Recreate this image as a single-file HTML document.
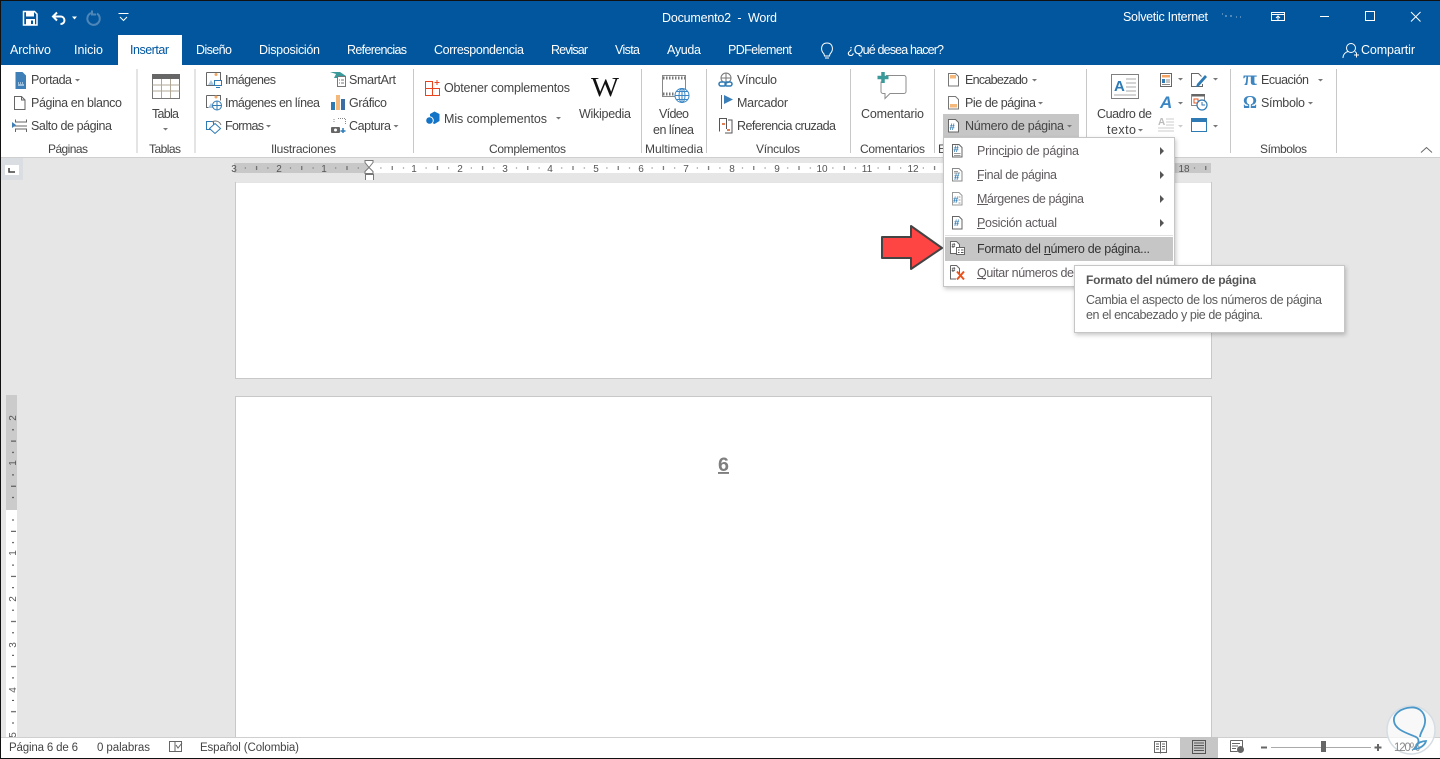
<!DOCTYPE html>
<html lang="es"><head><meta charset="utf-8"><title>Documento2 - Word</title>
<style>
html,body{margin:0;padding:0;background:#e6e6e6;width:1440px;height:759px;overflow:hidden}
svg{display:block;position:absolute;left:0;top:0}
text{font-family:"Liberation Sans",sans-serif;font-size:12.5px;fill:#444;white-space:pre}
.w text,text.w{fill:#fff}
.m text{fill:#5f5a5e}
.r text{font-size:10px;fill:#555}
.s text{font-size:11.5px;fill:#444}
.ic{fill:none;stroke:#666;stroke-width:1}
.c{fill:#777}
</style></head><body>
<svg width="1440" height="759" viewBox="0 0 1440 759" xmlns="http://www.w3.org/2000/svg">
<defs>
<pattern id="hr" x="233.5" y="163" width="45.2" height="10" patternUnits="userSpaceOnUse">
<rect x="11.3" y="4.500" width="1" height="1" fill="#555"/><rect x="22.6" y="3" width="1" height="4" fill="#555"/><rect x="33.9" y="4.500" width="1" height="1" fill="#555"/>
</pattern>
<pattern id="vr" x="6" y="418" width="11" height="45.1" patternUnits="userSpaceOnUse">
<rect x="6" y="11.3" width="2" height="1" fill="#444"/><rect x="5" y="22.6" width="5" height="1" fill="#444"/><rect x="6" y="33.9" width="2" height="1" fill="#444"/>
</pattern>
<filter id="sh" x="-5%" y="-5%" width="110%" height="115%"><feDropShadow dx="1" dy="2" stdDeviation="2" flood-color="#000" flood-opacity=".22"/></filter>
</defs>

<!-- background -->
<rect width="1440" height="759" fill="#e6e6e6"/>
<rect x="0" y="1" width="1440" height="64" fill="#01569e"/>
<rect x="118" y="35" width="64" height="30" fill="#fff"/>
<rect x="0" y="65" width="1440" height="92" fill="#fff"/>
<rect x="0" y="157" width="1440" height="1" fill="#cfcfcf"/>

<!-- QAT -->
<g fill="none" stroke="#fff">
<path d="M23.5 11.5h11l2.500 2.500v11h-13.500z" stroke-width="1.500"/>
<rect x="26" y="12" width="8" height="4.500" fill="#fff" stroke="none"/>
<rect x="26" y="19" width="9" height="6" fill="#fff" stroke="none"/>
<rect x="31" y="20.500" width="2" height="3.500" fill="#01569e" stroke="none"/>
<path d="M57 12.500l-4 4 4 4M53.500 16.500h7c5 0 5.500 7.500 0 7.500" stroke-width="2"/>
<path d="M97 13.500a6.200 6.200 0 1 1-6-.5M92 10.500v4h4" stroke="#4f86b8" stroke-width="2"/>
<path d="M118.500 13.500h10M120 17l3.500 3.500 3.500-3.500" stroke-width="1"/>
</g>
<path d="M72 16.500h5l-2.500 3z" fill="#fff"/>

<g class="w">
<text x="662" y="22" textLength="115" lengthAdjust="spacing">Documento2  -  Word</text>
<text x="1123" y="21" textLength="85" lengthAdjust="spacing">Solvetic Internet</text>
<text x="10" y="54" textLength="41" lengthAdjust="spacing">Archivo</text>
<text x="74" y="54" textLength="29" lengthAdjust="spacing">Inicio</text>
<text x="196" y="54" textLength="36" lengthAdjust="spacing">Diseño</text>
<text x="259" y="54" textLength="61" lengthAdjust="spacing">Disposición</text>
<text x="347" y="54" textLength="60" lengthAdjust="spacing">Referencias</text>
<text x="434" y="54" textLength="90" lengthAdjust="spacing">Correspondencia</text>
<text x="551" y="54" textLength="37" lengthAdjust="spacing">Revisar</text>
<text x="615" y="54" textLength="25" lengthAdjust="spacing">Vista</text>
<text x="667" y="54" textLength="34" lengthAdjust="spacing">Ayuda</text>
<text x="728" y="54" textLength="64" lengthAdjust="spacing">PDFelement</text>
<text x="847" y="54" textLength="97" lengthAdjust="spacing">¿Qué desea hacer?</text>
<text x="1361" y="54" textLength="54" lengthAdjust="spacing">Compartir</text>
</g>
<text x="130" y="54" textLength="39" lengthAdjust="spacing" style="fill:#01569e">Insertar</text>

<!-- window controls & bulbs -->
<g fill="none" stroke="#fff" stroke-width="1">
<path d="M1222 14h1M1225 16h2M1230 16h2M1236 17h1M1240 17h1" stroke="#9dbbd8"/>
<rect x="1271.500" y="12.500" width="13" height="8"/><path d="M1271.500 14.500h13M1278 20v-4M1276 18l2-2 2 2"/>
<path d="M1320 16.500h9"/><rect x="1365.500" y="11.500" width="9" height="9"/><path d="M1411 12l9.500 9.500M1420.500 12l-9.500 9.500"/>
<path d="M824 54c-4-4-3-11 3-11s7 7 3 11l-.5 2h-5zM825 58h4"/>
<circle cx="1351" cy="48" r="4.500"/><path d="M1343 58c0-4 3-6 5-6.500M1355 51.500l1 1M1354 55h5M1356.500 52.500v5"/>
</g>

<!-- Ribbon separators -->
<g fill="#c8c8c8">
<rect x="136.500" y="69" width="1" height="84"/><rect x="194.500" y="69" width="1" height="84"/><rect x="413" y="69" width="1" height="84"/><rect x="641" y="69" width="1" height="84"/><rect x="706" y="69" width="1" height="84"/><rect x="850" y="69" width="1" height="84"/><rect x="934" y="69" width="1" height="84"/><rect x="1086" y="69" width="1" height="84"/><rect x="1230" y="69" width="1" height="84"/><rect x="1336" y="69" width="1" height="84"/>
</g>

<!-- hover on Numero de pagina -->
<rect x="943" y="114" width="136" height="23" fill="#c6c6c6"/>

<!-- ribbon text -->
<text x="31" y="84" textLength="41">Portada</text>
<text x="31" y="107" textLength="91">Página en blanco</text>
<text x="31" y="130" textLength="81">Salto de página</text>
<text x="48" y="153" textLength="40" style="font-size:12px">Páginas</text>
<text x="152" y="118" textLength="27">Tabla</text>
<text x="149" y="153" textLength="32" style="font-size:12px">Tablas</text>
<text x="225" y="84" textLength="51">Imágenes</text>
<text x="225" y="107" textLength="95">Imágenes en línea</text>
<text x="225" y="130" textLength="39">Formas</text>
<text x="349" y="84" textLength="47">SmartArt</text>
<text x="349" y="107" textLength="38">Gráfico</text>
<text x="349" y="130" textLength="42">Captura</text>
<text x="271" y="153" textLength="65" style="font-size:12px">Ilustraciones</text>
<text x="444" y="92" textLength="126">Obtener complementos</text>
<text x="444" y="123" textLength="103">Mis complementos</text>
<text x="579" y="118" textLength="52">Wikipedia</text>
<text x="489" y="153" textLength="77" style="font-size:12px">Complementos</text>
<text x="659" y="118" textLength="30">Vídeo</text>
<text x="653" y="134" textLength="41">en línea</text>
<text x="645" y="153" textLength="58" style="font-size:12px">Multimedia</text>
<text x="737" y="84" textLength="40">Vínculo</text>
<text x="737" y="107" textLength="51">Marcador</text>
<text x="737" y="130" textLength="99">Referencia cruzada</text>
<text x="756" y="153" textLength="44" style="font-size:12px">Vínculos</text>
<text x="861" y="118" textLength="63">Comentario</text>
<text x="860" y="153" textLength="65" style="font-size:12px">Comentarios</text>
<text x="938" y="153" style="font-size:12px">E</text>
<text x="965" y="84" textLength="63">Encabezado</text>
<text x="965" y="107" textLength="71">Pie de página</text>
<text x="965" y="130" textLength="99">Número de página</text>
<text x="1097" y="118" textLength="55">Cuadro de</text>
<text x="1107" y="134" textLength="29">texto</text>
<text x="1261" y="84" textLength="48">Ecuación</text>
<text x="1261" y="107" textLength="44">Símbolo</text>
<text x="1260" y="153" textLength="47" style="font-size:12px">Símbolos</text>
<text x="591" y="96" style="font-family:'Liberation Serif',serif;font-size:27px;fill:#111" textLength="28" lengthAdjust="spacingAndGlyphs">W</text>
<text x="1243" y="85" style="font-family:'Liberation Serif',serif;font-size:21px;fill:#3d85c0;font-weight:bold" textLength="14" lengthAdjust="spacingAndGlyphs">π</text>
<text x="1243" y="108" style="font-family:'Liberation Serif',serif;font-size:18px;fill:#3d85c0;font-weight:bold" textLength="14" lengthAdjust="spacingAndGlyphs">Ω</text>

<!-- carets -->
<g class="c">
<path d="M75 79h5l-2.500 2.500z"/><path d="M163 128h5l-2.500 2.500z"/><path d="M266 125h5l-2.500 2.500z"/><path d="M393.500 125h5l-2.500 2.500z"/><path d="M556 117h5l-2.500 2.500z"/>
<path d="M1032 79h5l-2.500 2.500z"/><path d="M1038 102h5l-2.500 2.500z"/><path d="M1067 125h5l-2.500 2.500z"/><path d="M1138 129h5l-2.500 2.500z"/>
<path d="M1178 78h5l-2.500 2.500z"/><path d="M1178 102h5l-2.500 2.500z"/><path d="M1213 78h5l-2.500 2.500z"/><path d="M1213 125h5l-2.500 2.500z"/>
<path d="M1318 79h5l-2.500 2.500z"/><path d="M1308 102h5l-2.500 2.500z"/>
<path d="M1178 125h5l-2.500 2.500z" fill="#ccc"/>
</g>
<path d="M1421 152.500l5.500-5 5.500 5" fill="none" stroke="#666"/>

<!-- Paginas icons -->
<path d="M15.500 72h7l3.500 3.500V89h-10.500z" fill="#3e7fb8"/><path d="M18 83h6" stroke="#fff" stroke-dasharray="1 1"/><path d="M18 85h6" stroke="#fff"/>
<path class="ic" d="M14.500 96.500h7l3.500 3.500v9.500h-10.500z M21.500 96.500v3.500h3.500"/>
<path class="ic" d="M15.500 119.500v2.500h11v-2.500M15.500 132v-3h11v3M27 126h-14"/><path d="M12 122l4 3-4 3z" fill="#3e7fb8"/>

<!-- Tabla icon -->
<rect x="152.500" y="74.500" width="27" height="24" fill="#fff" stroke="#777"/><rect x="152" y="74" width="28" height="5" fill="#666"/>
<path d="M152.500 85h27M152.500 91h27M161.500 79v19M170.500 79v19" stroke="#b0a898" fill="none"/>

<!-- Ilustraciones icons -->
<g>
<path d="M206.500 72.500h14v9M206.500 72.500v13h9" class="ic"/><circle cx="216" cy="74.500" r="1.500" fill="#f4a460"/><path d="M208 85l3-5 3 5z" fill="#a8c6e0"/>
<rect x="214.500" y="80.500" width="7" height="5" fill="#fff" stroke="#2d7ab5"/><path d="M216 87.500h4" stroke="#2d7ab5"/>
<path d="M206.500 95.500h14v5M206.500 95.500v12h7" class="ic"/><circle cx="216" cy="97" r="1.500" fill="#f4a460"/><path d="M208 108l3-5 3 5z" fill="#a8c6e0"/>
<circle cx="217" cy="105.500" r="4.500" fill="#fff" stroke="#2d7ab5"/><path d="M212.500 105.500h9M217 101v9" stroke="#2d7ab5"/>
<rect x="206.500" y="121.500" width="7" height="8" fill="none" stroke="#2d7ab5"/>
<path d="M215 123.500l5.500 5-5.500 5-5.500-5z" fill="#fff" stroke="#2d7ab5"/><path d="M212 122a6 6 0 0 1 9 3" fill="none" stroke="#777"/>
<path d="M330 72h10l6 4h-4l-1 2h-7l2-4z" fill="#3a9a9a"/><rect x="337.500" y="76.500" width="8" height="10" fill="#fff" stroke="#777"/><path d="M339 80h1M341 80h3M339 83h1M341 83h3" stroke="#777"/>
<rect x="331" y="102" width="4" height="8" fill="#2d7ab5"/><rect x="336" y="95" width="4" height="15" fill="#f4b97a"/><rect x="341" y="99" width="4" height="11" fill="#3c6ea3"/>
<path d="M334 122v-3h1M338 118.500h8M345.500 119v5" stroke="#888" stroke-dasharray="1 1" fill="none"/><rect x="331" y="127" width="9" height="6" rx="1" fill="#666"/><circle cx="335.500" cy="130" r="1.500" fill="#fff"/><path d="M343 128v5M340.500 131h5" stroke="#2d7ab5" stroke-width="1.500"/>
</g>

<!-- Complementos -->
<path d="M425.500 81.500h7v7h-7zM432.500 88.500h7v7h-7zM425.500 88.500h7v7h-7zM432.500 84v-2.500" fill="none" stroke="#e8451f"/><path d="M437 80v5M434.500 82.500h5" stroke="#e8451f"/>
<path d="M430 114l4.500-2.500 5 2.500v7l-5 3-4.500-2z" fill="#1373c7"/>
<circle cx="429.500" cy="120.500" r="3.800" fill="#1373c7" stroke="#fff" stroke-width="1"/>

<!-- Multimedia -->
<rect x="662.500" y="75.500" width="23" height="21" fill="#fff" stroke="#888"/><path d="M663 78h22M663 94h12" stroke="#777" stroke-width="3" stroke-dasharray="1.500 1.500"/>
<circle cx="682" cy="95.500" r="7" fill="#fff" stroke="#3a86c4"/><path d="M675 95.500h14M682 88.500v14M676.500 91.500h11M676.500 99.500h11" stroke="#3a86c4" fill="none"/><ellipse cx="682" cy="95.500" rx="3" ry="7" fill="none" stroke="#3a86c4"/>

<!-- Vinculos -->
<circle cx="726" cy="78" r="5" fill="none" stroke="#777"/><path d="M721 78h10M726 73v10" stroke="#777"/>
<rect x="719" y="82" width="7" height="4" rx="2" fill="#fff" stroke="#2d7ab5" stroke-width="1.500"/><rect x="725" y="82" width="7" height="4" rx="2" fill="none" stroke="#2d7ab5" stroke-width="1.500"/>
<path d="M721.500 95v14" stroke="#666"/><path d="M724 95l9 4.500-9 4.500z" fill="#3a7fb8"/>
<path d="M719.500 131.500v-13h7v10.500" fill="none" stroke="#555"/><path d="M722 124h3" stroke="#d9541e" stroke-width="1.500"/>
<path d="M728 120h4v13h-7" fill="none" stroke="#555"/><path d="M727 130h3" stroke="#d9541e" stroke-width="1.500"/>

<!-- Comentario -->
<path d="M886 75.500h18a2 2 0 0 1 2 2v14a2 2 0 0 1-2 2h-14l-5 5v-5h-2a2 2 0 0 1-2-2v-10" fill="#fff" stroke="#8d8d8d"/>
<path d="M883 72v11M877.500 77.500h11" stroke="#3a9a9a" stroke-width="3.500"/>

<!-- Encabezado icons -->
<path d="M948.500 73.500h7l3 3V86h-10z" fill="#fff" stroke="#777"/><rect x="950" y="75" width="6" height="3.500" fill="#f4b97a"/>
<path d="M948.500 96.500h7l3 3V109h-10z" fill="#fff" stroke="#777"/><rect x="950" y="104" width="7" height="3.500" fill="#f4b97a"/>
<path d="M948.500 119.500h7l3 3V132h-10z" fill="#fff" stroke="#666"/>
<text x="949.500" y="130" style="font-size:9.500px;font-weight:bold;fill:#2d7ab5">#</text>

<!-- Text icons -->
<rect x="1111.500" y="74.500" width="27" height="24" fill="#fff" stroke="#808080"/>
<text x="1114" y="91" style="font-size:15px;fill:#2d7ab5;font-weight:bold">A</text>
<path d="M1126 79h10M1126 83h10M1126 87h10M1126 91h10M1114 95h22" stroke="#aaa" fill="none"/>
<rect x="1160.500" y="73.500" width="11" height="13" fill="#fff" stroke="#666"/><rect x="1162" y="75" width="8" height="2.500" fill="#f4a460"/><rect x="1162" y="79" width="3" height="4" fill="#2d7ab5"/><path d="M1166 80h4M1166 82h4M1162 84.500h8" stroke="#888"/>
<path d="M1191.500 84v-10.500h7l3 3M1191.500 84v2.500h11V84" fill="none" stroke="#666"/><path d="M1197 84l8-9 2 2-8 9-3 1z" fill="#2d7ab5"/>
<text x="1160" y="108" style="font-size:17px;font-weight:bold;font-style:italic;fill:#3a86c4">A</text>
<rect x="1191.500" y="94.500" width="13" height="11" fill="#fff" stroke="#888"/><rect x="1192" y="94" width="13" height="2.500" fill="#666"/><rect x="1194" y="99" width="4" height="4" fill="none" stroke="#e8541e"/>
<circle cx="1202" cy="105" r="5" fill="#fff" stroke="#2d7ab5" stroke-width="1.200"/><path d="M1202 102v3h3" fill="none" stroke="#2d7ab5"/>
<text x="1158" y="125" style="font-size:10px;font-weight:bold;fill:#bbb">A</text>
<path d="M1166 119h8M1166 122h8M1166 125h8M1158 128h16M1158 131h16" stroke="#ccc"/>
<rect x="1191.500" y="118.500" width="15" height="13" fill="#fff" stroke="#2d7ab5"/><rect x="1191" y="118" width="16" height="4" fill="#2d7ab5"/>

<!-- Ruler -->
<rect x="234" y="163" width="977" height="10" fill="#fff"/>
<rect x="234" y="163" width="135" height="10" fill="#c8c8c8"/>
<rect x="1175" y="163" width="36" height="10" fill="#c8c8c8"/>
<rect x="234" y="163" width="977" height="10" fill="url(#hr)"/>
<rect x="0" y="158" width="23" height="22" fill="#dadee3"/><rect x="5" y="165" width="14" height="10" fill="#fff"/><path d="M9 168v4h6" fill="none" stroke="#444" stroke-width="1.500"/>
<g class="r" text-anchor="middle">
<text x="234" y="172">3</text><text x="279" y="172">2</text><text x="324" y="172">1</text><text x="414" y="172">1</text><text x="460" y="172">2</text><text x="505" y="172">3</text><text x="550" y="172">4</text><text x="596" y="172">5</text><text x="641" y="172">6</text><text x="686" y="172">7</text><text x="732" y="172">8</text><text x="777" y="172">9</text><text x="822" y="172">10</text><text x="867" y="172">11</text><text x="913" y="172">12</text><text x="1184" y="172">18</text>
</g>
<path d="M365 160.500h8v2l-4 5-4-5zM365 173.500v-2l4-4 4 4v2z" fill="#fff" stroke="#777"/><rect x="365.500" y="174.500" width="8" height="6" fill="#fff" stroke="#777"/>

<!-- Vertical ruler -->
<rect x="6" y="395" width="11" height="342" fill="#fff"/><rect x="6" y="395" width="11" height="115" fill="#cbcbcb"/>
<rect x="6" y="418" width="11" height="319" fill="url(#vr)"/>
<g class="r" text-anchor="middle">
<text transform="translate(16,418) rotate(-90)">2</text><text transform="translate(16,463) rotate(-90)">1</text><text transform="translate(16,553) rotate(-90)">1</text><text transform="translate(16,599) rotate(-90)">2</text><text transform="translate(16,645) rotate(-90)">3</text><text transform="translate(16,690) rotate(-90)">4</text><text transform="translate(16,735) rotate(-90)">5</text>
</g>

<!-- Pages -->
<rect x="235.500" y="182" width="976" height="196.500" fill="#fff" stroke="#c8c8c8"/>
<rect x="235" y="180" width="977" height="2" fill="#e6e6e6"/>
<rect x="235.500" y="396.500" width="976" height="345" fill="#fff" stroke="#c8c8c8"/>
<text x="718" y="471" style="font-size:19px;font-weight:bold;fill:#7f7f7f;text-decoration:underline" textLength="11" lengthAdjust="spacingAndGlyphs">6</text>

<!-- Status bar -->
<rect x="0" y="737" width="1440" height="21" fill="#fff"/><rect x="0" y="737" width="1440" height="1" fill="#cfcfcf"/>
<rect x="1180" y="737" width="38" height="21" fill="#c6c6c6"/>
<g class="s">
<text x="9" y="751" textLength="69">Página 6 de 6</text>
<text x="97" y="751" textLength="53">0 palabras</text>
<text x="200" y="751" textLength="99">Español (Colombia)</text>
</g>
<path d="M169.500 741.500h5.500v10h-5.500zM175.500 741.500h6v10h-6M176 745l2 3 4-5" fill="none" stroke="#666"/>
<g fill="none" stroke="#666">
<path d="M1154.500 741.500h12v11h-12zM1160.500 741.500v12M1156 744h3M1156 746.500h3M1156 749h3M1162 744h3M1162 746.500h3M1162 749h3"/>
<path d="M1192.500 740.500h13v13h-13zM1194 743h10M1194 745.500h10M1194 748h10M1194 750.500h10" stroke="#555"/>
<path d="M1230.500 740.500h12v8M1230.500 740.500v11h7M1232 743.500h8M1232 746h6M1232 748.500h4"/>
</g>
<circle cx="1240.500" cy="749.500" r="3.500" fill="#666"/>
<path d="M1261 747.500h6" stroke="#666" stroke-width="2"/><path d="M1271 747.500h100" stroke="#aaa"/><rect x="1321" y="741" width="5" height="11" fill="#666"/><path d="M1374.500 747.500h7M1378 744v7" stroke="#666" stroke-width="2"/>

<!-- Window frame -->
<rect x="0" y="0" width="1440" height="1" fill="#111"/><rect x="0" y="0" width="1" height="759" fill="#111"/><rect x="0" y="758" width="1440" height="1" fill="#111"/>

<!-- Watermark -->
<circle cx="1411" cy="730" r="24" fill="#fff" fill-opacity=".7" stroke="#d5dde3" stroke-width="1.500"/>
<text x="1394" y="751" textLength="26" style="font-size:11.500px;fill:#888">120%</text>
<path d="M1420 737C1420 732 1426 727 1425 719C1424 711 1418 707 1411 707.500C1401 708 1393 714 1394 721C1395 730 1407 733 1416 737C1420 739 1419 745 1414 749C1420 749 1425 745 1426 741C1422 741 1418 743 1416 745" fill="none" stroke="#4a97c9" stroke-width="1.800"/>

<!-- Dropdown menu -->
<rect x="943.500" y="137.500" width="231" height="149" fill="#fff" stroke="#c6c6c6" filter="url(#sh)"/>
<rect x="945" y="235" width="228" height="1" fill="#e1e1e1"/>
<rect x="945" y="237" width="228" height="24" fill="#c6c6c6"/>
<g class="m">
<text x="977" y="155" textLength="102">Principio de página</text>
<text x="977" y="179" textLength="80">Final de página</text>
<text x="977" y="203" textLength="107">Márgenes de página</text>
<text x="977" y="227" textLength="80">Posición actual</text>
<text x="977" y="253" textLength="173" style="fill:#333">Formato del número de página...</text>
<text x="977" y="277" textLength="97">Quitar números de</text>
</g>
<!-- mnemonic underlines -->
<g fill="#5f5a5e">
<rect x="1003" y="156" width="6" height="1"/>
<rect x="977" y="180" width="6" height="1"/>
<rect x="977" y="204" width="11" height="1"/>
<rect x="977" y="228" width="8" height="1"/>
<rect x="1044" y="254" width="7" height="1" fill="#333"/>
<rect x="977" y="278" width="9" height="1"/>
</g>
<g fill="#555">
<path d="M1160 147v8l4-4z"/><path d="M1160 171v8l4-4z"/><path d="M1160 195v8l4-4z"/><path d="M1160 219v8l4-4z"/>
</g>
<g fill="#fff" stroke="#666">
<path d="M952.500 144.500h6.500l3 3V157h-9.500z"/><path d="M954 153.500h6.500M954 155.500h6.500" stroke="#999"/>
<path d="M952.500 168.500h6.500l3 3V181h-9.500z" stroke="#888"/><path d="M954 171.500h4M954 173h6" stroke="#999"/>
<path d="M952.500 192.500h6.500l3 3V205h-9.500z" stroke="#999"/><path d="M958.500 197h2M958.500 200h2M958.500 203h2" stroke="#999"/>
<path d="M952.500 216.500h6.500l3 3V229h-9.500z"/>
<path d="M950.500 241.500h6l3 3v3h-2.500v6h-6.500z"/><rect x="956.500" y="247.500" width="8" height="7"/>
<path d="M950.500 265.500h6l3 3v5M950.500 265.500V279h5.500" fill="none"/>
</g>
<path d="M958 250h1.500M961 250h2.500M958 252.500h1.500M961 252.500h2.500" stroke="#555"/>
<path d="M957 271.500l7 8M964 271.500l-7 8" stroke="#e8541e" stroke-width="2"/>
<text x="953.500" y="152" style="font-size:9.500px;font-weight:bold;fill:#2d7ab5">#</text>
<text x="954" y="180" style="font-size:9.500px;font-weight:bold;fill:#2d7ab5">#</text>
<text x="953" y="203" style="font-size:9.500px;font-weight:bold;fill:#2d7ab5">#</text>
<text x="954" y="226" style="font-size:9.500px;font-weight:bold;fill:#2d7ab5">#</text>
<text x="951.500" y="248" style="font-size:7px;font-weight:bold;fill:#444">#</text>
<text x="951.500" y="272" style="font-size:7px;font-weight:bold;fill:#444">#</text>

<!-- Red arrow -->
<path d="M882 237h29v-11l31 22-31 21v-11h-29z" fill="#ff4444" stroke="#444" stroke-width="2" stroke-linejoin="round"/>

<!-- Tooltip -->
<rect x="1074.500" y="265.500" width="270" height="67" fill="#fff" stroke="#c6c6c6" filter="url(#sh)"/>
<text x="1086" y="284" textLength="170" style="font-weight:bold;font-size:12px;fill:#555">Formato del número de página</text>
<text x="1086" y="304" textLength="236" style="fill:#5a5a5a">Cambia el aspecto de los números de página</text>
<text x="1086" y="319" textLength="177" style="fill:#5a5a5a">en el encabezado y pie de página.</text>
</svg>
</body></html>
